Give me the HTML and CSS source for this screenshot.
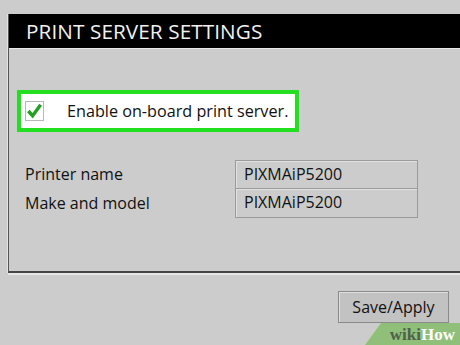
FILE: index.html
```html
<!DOCTYPE html>
<html>
<head>
<meta charset="utf-8">
<link rel="stylesheet" href="styles.css">
</head>
<body>
<div class="page">
  <section class="panel">
    <header class="panel-head">PRINT SERVER SETTINGS</header>
    <div class="panel-body">
      <label class="enable-box">
        <span class="checkbox">
          <svg viewBox="0 0 18 18" width="18" height="18"><path d="M2.5 9 L7 14 L15.5 2.5" fill="none" stroke="#23a023" stroke-width="3.6" stroke-linejoin="miter" stroke-linecap="butt"/></svg>
        </span>
        <span class="enable-text">Enable on-board print server.</span>
      </label>
      <div class="fields">
        <div class="field-label">Printer name</div>
        <div class="field-value">PIXMAiP5200</div>
        <div class="field-label">Make and model</div>
        <div class="field-value">PIXMAiP5200</div>
      </div>
    </div>
  </section>
  <div class="actions">
    <button class="btn">Save/Apply</button>
  </div>
  <div class="watermark"><span class="wm-wiki">wiki</span><span class="wm-how">How</span></div>
</div>
</body>
</html>
```

FILE: styles.css
```css
html, body {
  margin: 0;
  padding: 0;
  width: 460px;
  height: 345px;
  overflow: hidden;
  background: #cccccc;
  font-family: "Open Sans", "Noto Sans", sans-serif;
}
.page {
  position: relative;
  width: 460px;
  height: 345px;
  padding-top: 14px;
  box-sizing: border-box;
}
.panel {
  margin-left: 8px;
  width: 470px;
  height: 259px;
  box-sizing: border-box;
  border-left: 1px solid #555;
  border-bottom: 2px solid #444;
  box-shadow: -1px 0 0 #e4e4e4, 0 2px 0 #e6e6e6;
  display: flex;
  flex-direction: column;
}
.panel-head {
  height: 34px;
  background: #000;
  color: #f0f0f0;
  font-size: 20.7px;
  line-height: 35px;
  padding-left: 17px;
  border-bottom: 1px solid #e8e8e8;
  letter-spacing: 0.1px;
}
.panel-body {
  padding: 41px 0 0 8px;
}
.enable-box {
  display: flex;
  align-items: center;
  width: 282px;
  height: 42px;
  box-sizing: border-box;
  border: 4px solid #22e01f;
  background: #ffffff;
  padding-left: 4px;
}
.checkbox {
  width: 17px;
  height: 18px;
  border: 1px solid #b8b8b8;
  background: #fff;
  display: flex;
  align-items: center;
  justify-content: center;
}
.enable-text {
  margin-left: 23px;
  font-size: 16.2px;
  color: #111;
}
.fields {
  margin-top: 28px;
  margin-left: 8px;
  display: grid;
  grid-template-columns: 210px 183px;
  grid-auto-rows: 29px;
  font-size: 16px;
  color: #111;
}
.field-label {
  line-height: 28px;
}
.field-value {
  border: 1px solid #9a9a9a;
  box-shadow: inset 1px 1px 0 #e2e2e2;
  padding-left: 8px;
  line-height: 27px;
}
.field-value + .field-label + .field-value {
  margin-top: -1px;
}
.actions {
  display: flex;
  justify-content: flex-end;
  padding: 18px 11px 0 0;
}
.btn {
  width: 111px;
  height: 32px;
  background: #c2c2c2;
  border: 1px solid #8a8a8a;
  box-shadow: inset 1px 1px 0 #dedede;
  font-family: "Open Sans", "Noto Sans", sans-serif;
  font-size: 16px;
  color: #111;
  padding: 0;
}
.watermark {
  position: absolute;
  right: 0;
  bottom: 0;
  width: 95px;
  height: 22px;
  background: #8fbf78;
  clip-path: polygon(16px 0, 100% 0, 100% 100%, 0 100%);
  font-family: "Liberation Serif", serif;
  font-weight: bold;
  font-size: 17px;
  line-height: 23px;
  text-align: right;
  padding-right: 5px;
  box-sizing: border-box;
}
.wm-wiki { color: #4f604b; }
.wm-how { color: #ffffff; }
```
